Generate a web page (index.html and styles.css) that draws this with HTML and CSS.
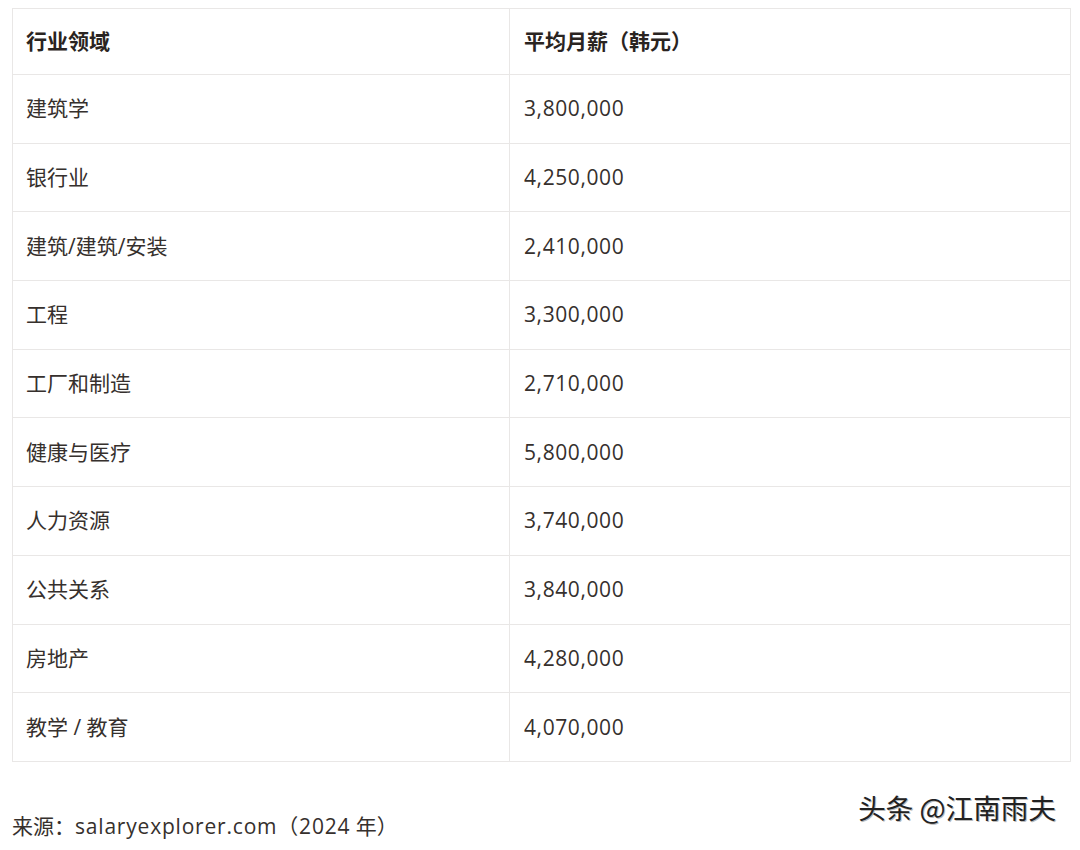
FILE: index.html
```html
<!DOCTYPE html>
<html lang="zh-CN">
<head>
<meta charset="utf-8">
<link rel="stylesheet" href="styles.css">
</head>
<body>
<div class="page">
  <table class="salary">
    <thead>
      <tr><th>行业领域</th><th class="col2">平均月薪（韩元）</th></tr>
    </thead>
    <tbody>
      <tr><td>建筑学</td><td class="num">3,800,000</td></tr>
      <tr><td>银行业</td><td class="num">4,250,000</td></tr>
      <tr><td>建筑/建筑/安装</td><td class="num">2,410,000</td></tr>
      <tr><td>工程</td><td class="num">3,300,000</td></tr>
      <tr><td>工厂和制造</td><td class="num">2,710,000</td></tr>
      <tr><td>健康与医疗</td><td class="num">5,800,000</td></tr>
      <tr><td>人力资源</td><td class="num">3,740,000</td></tr>
      <tr><td>公共关系</td><td class="num">3,840,000</td></tr>
      <tr><td>房地产</td><td class="num">4,280,000</td></tr>
      <tr><td>教学 / 教育</td><td class="num">4,070,000</td></tr>
    </tbody>
  </table>
  <div class="footer">
    <p class="source">来源：<span class="latin">salaryexplorer.com（2024</span> 年）</p>
    <span class="mark">头条 @江南雨夫</span>
  </div>
</div>
</body>
</html>
```

FILE: styles.css
```css
html, body {
  margin: 0;
  padding: 0;
  background: #ffffff;
}
.page {
  padding: 8px 10px 0 12px;
  font-family: "Open Sans", "Noto Sans CJK SC", sans-serif;
  color: #36302d;
}
.salary {
  width: 1059px;
  border-collapse: collapse;
  table-layout: fixed;
}
.salary th, .salary td {
  border: 1px solid #e9e7e6;
  text-align: left;
  padding: 0 14px 0 13px;
  height: 67.7px;
  font-size: 21px;
  line-height: 1;
}
.salary th {
  height: 65px;
  font-weight: 700;
  color: #2a2421;
}
.salary th:first-child, .salary td:first-child {
  width: 469px;
}
.salary td.num, .salary th.col2 {
  padding-left: 14px;
}
.salary td.num {
  letter-spacing: 0.6px;
}
.footer {
  position: relative;
  height: 89px;
}
.source {
  margin: 0;
  padding-top: 52px;
  font-size: 21px;
  line-height: 24px;
  color: #36302d;
}
.latin {
  letter-spacing: 0.8px;
}
.mark {
  position: absolute;
  right: 14px;
  top: 25px;
  font-size: 27.6px;
  font-family: "Noto Sans CJK SC", sans-serif;
  color: #222;
  text-shadow: 1px 1px 0 #bbb, -1px 0 0 #fff;
}
```
